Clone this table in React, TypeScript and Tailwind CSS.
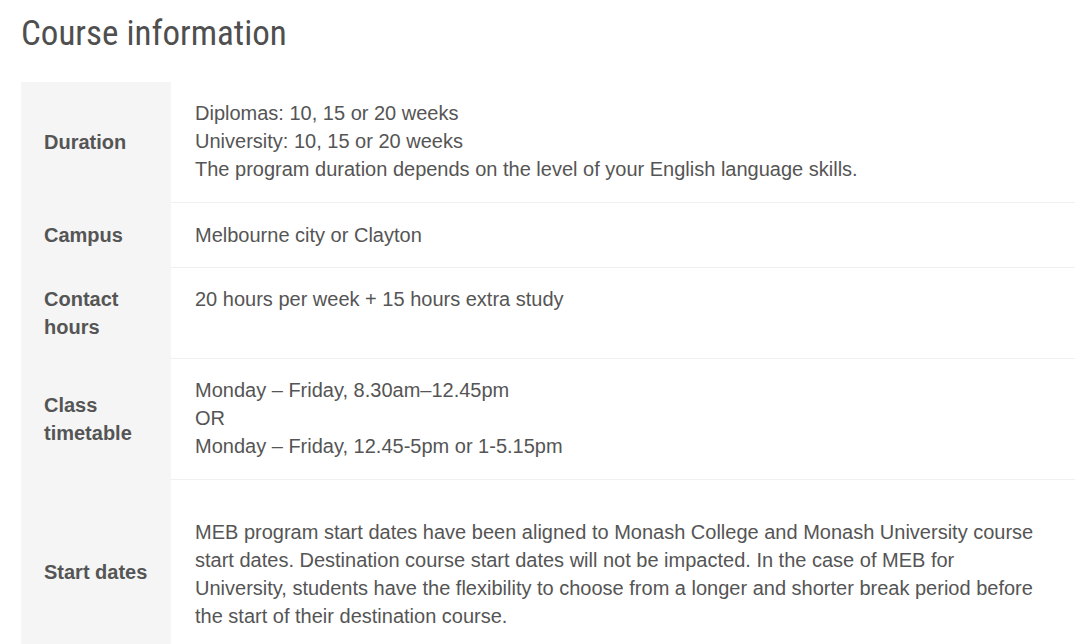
import React from "react";

const rows: { label: React.ReactNode; value: React.ReactNode; valueClass: string }[] = [
  {
    label: "Duration",
    value: (
      <>
        Diplomas: 10, 15 or 20 weeks
        <br />
        University: 10, 15 or 20 weeks
        <br />
        The program duration depends on the level of your English language skills.
      </>
    ),
    valueClass: "pt-[17px] pb-[19px]",
  },
  { label: "Campus", value: "Melbourne city or Clayton", valueClass: "pt-[18px] pb-[18px]" },
  {
    label: (
      <>
        Contact
        <br />
        hours
      </>
    ),
    value: "20 hours per week + 15 hours extra study",
    valueClass: "pt-[17px] pb-[19px]",
  },
  {
    label: (
      <>
        Class
        <br />
        timetable
      </>
    ),
    value: (
      <>
        Monday – Friday, 8.30am–12.45pm
        <br />
        OR
        <br />
        Monday – Friday, 12.45-5pm or 1-5.15pm
      </>
    ),
    valueClass: "pt-[17px] pb-[19px]",
  },
  {
    label: "Start dates",
    value:
      "MEB program start dates have been aligned to Monash College and Monash University course start dates. Destination course start dates will not be impacted. In the case of MEB for University, students have the flexibility to choose from a longer and shorter break period before the start of their destination course.",
    valueClass: "pt-[38px] pb-[34px] pr-6",
  },
];

export default function App() {
  return (
    <div className="w-[1080px] bg-white pl-[21px] pr-[5px] text-[#555]" style={{ fontFamily: "'Liberation Sans', Arial, sans-serif" }}>
      <h1
        className="pt-[10px] pb-[24px] text-[35px] leading-[48px] font-normal text-[#4f4f4f] font-stretch-condensed"
        style={{ fontFamily: "Roboto, 'Noto Sans', sans-serif" }}
      >
        Course information
      </h1>
      <div className="grid grid-cols-[150px_1fr] text-[20px] leading-[28px]">
        {rows.map((r, i) => (
          <React.Fragment key={i}>
            <div className="flex items-center bg-[#f5f5f5] px-[23px] pt-[17px] pb-[18px] font-bold text-[#555]">
              <div>{r.label}</div>
            </div>
            <div className={`border-b border-[#f0f0f0] pl-6 ${r.valueClass}`}>{r.value}</div>
          </React.Fragment>
        ))}
      </div>
    </div>
  );
}
